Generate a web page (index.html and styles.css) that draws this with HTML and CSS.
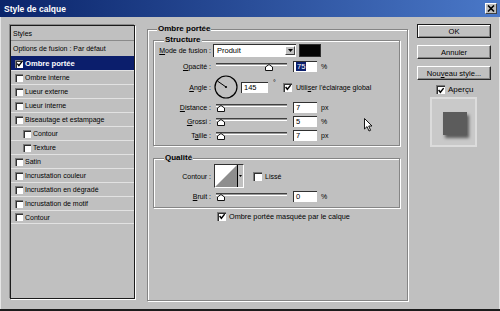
FILE: index.html
```html
<!DOCTYPE html>
<html lang="fr">
<head>
    <meta charset="UTF-8">
    <title>Style de calque</title>
    <link rel="stylesheet" href="styles.css">
</head>
<body>
    <div class="window">
        <div class="titlebar">
            <span class="title">Style de calque</span>
            <span class="close">
                <svg width="8" height="7" viewBox="0 0 8 7"><path d="M1 0.5 L7 6.5 M7 0.5 L1 6.5" stroke="#000" stroke-width="1.6"/></svg>
            </span>
        </div>

        <div class="content">
            <!-- Liste des styles -->
            <div class="styles">
                <div class="styles-head">Styles</div>
                <div class="style-item plain">Options de fusion : Par défaut</div>
                <div class="style-item active"><span class="cb small on"><svg width="8" height="8" viewBox="0 0 8 8"><path d="M1.5 3.5 L3.3 5.8 L6.8 1.2" stroke="#000" stroke-width="1.6" fill="none"/></svg></span>Ombre portée</div>
                <div class="style-item"><span class="cb small"></span>Ombre interne</div>
                <div class="style-item"><span class="cb small"></span>Lueur externe</div>
                <div class="style-item"><span class="cb small"></span>Lueur interne</div>
                <div class="style-item"><span class="cb small"></span>Biseautage et estampage</div>
                <div class="style-item sub"><span class="cb small"></span>Contour</div>
                <div class="style-item sub"><span class="cb small"></span>Texture</div>
                <div class="style-item"><span class="cb small"></span>Satin</div>
                <div class="style-item"><span class="cb small"></span>Incrustation couleur</div>
                <div class="style-item"><span class="cb small"></span>Incrustation en dégradé</div>
                <div class="style-item"><span class="cb small"></span>Incrustation de motif</div>
                <div class="style-item last"><span class="cb small"></span>Contour</div>
            </div>

            <!-- Réglages -->
            <div class="panel">
                <div class="legend">Ombre portée</div>

                <div class="group structure">
                    <div class="legend sub-legend">Structure</div>

                    <div class="row row-mode">
                        <span class="lbl"><u>M</u>ode de fusion :</span>
                        <div class="select">
                            <span>Produit</span>
                            <span class="drop"><svg width="5" height="3" viewBox="0 0 5 3"><path d="M0 0 H5 L2.5 3 Z" fill="#000"/></svg></span>
                        </div>
                        <span class="swatch"></span>
                    </div>

                    <div class="row row-slider gap2">
                        <span class="lbl"><u>O</u>pacité :</span>
                        <div class="slider"><span class="track"></span><svg class="thumb" style="left: 52px" width="8" height="7" viewBox="0 0 8 7"><path d="M0.5 6.5 V3 L4 0.5 L7.5 3 V6.5 Z" fill="#fff" stroke="#111" stroke-width="1"/></svg></div>
                        <span class="field"><span class="sel">75</span></span>
                        <span class="unit">%</span>
                    </div>

                    <div class="row row-angle gap2">
                        <span class="lbl"><u>A</u>ngle :</span>
                        <svg class="dial" width="24" height="24" viewBox="0 0 24 24">
                            <circle cx="12" cy="12" r="11" stroke="#000" stroke-width="1.2" fill="none"/>
                            <path d="M12 12 L3.8 6.3" stroke="#000" stroke-width="1"/>
                            <circle cx="12" cy="12" r="1.1" fill="#000"/>
                        </svg>
                        <span class="field field-wide">145</span>
                        <span class="deg">°</span>
                        <span class="cb on"><svg width="9" height="9" viewBox="0 0 9 9"><path d="M1.8 4 L3.8 6.5 L7.5 1.8" stroke="#000" stroke-width="1.6" fill="none"/></svg></span>
                        <span class="cb-text">Utili<u>s</u>er l'éclairage global</span>
                    </div>

                    <div class="row row-slider gap1">
                        <span class="lbl"><u>D</u>istance :</span>
                        <div class="slider"><span class="track"></span><svg class="thumb" style="left: 4px" width="8" height="7" viewBox="0 0 8 7"><path d="M0.5 6.5 V3 L4 0.5 L7.5 3 V6.5 Z" fill="#fff" stroke="#111" stroke-width="1"/></svg></div>
                        <span class="field">7</span>
                        <span class="unit">px</span>
                    </div>

                    <div class="row row-slider">
                        <span class="lbl"><u>G</u>rossi :</span>
                        <div class="slider"><span class="track"></span><svg class="thumb" style="left: 4px" width="8" height="7" viewBox="0 0 8 7"><path d="M0.5 6.5 V3 L4 0.5 L7.5 3 V6.5 Z" fill="#fff" stroke="#111" stroke-width="1"/></svg></div>
                        <span class="field">5</span>
                        <span class="unit">%</span>
                    </div>

                    <div class="row row-slider">
                        <span class="lbl">T<u>a</u>ille :</span>
                        <div class="slider"><span class="track"></span><svg class="thumb" style="left: 4px" width="8" height="7" viewBox="0 0 8 7"><path d="M0.5 6.5 V3 L4 0.5 L7.5 3 V6.5 Z" fill="#fff" stroke="#111" stroke-width="1"/></svg></div>
                        <span class="field">7</span>
                        <span class="unit">px</span>
                    </div>
                </div>

                <div class="group quality">
                    <div class="legend sub-legend">Qualité</div>

                    <div class="row row-contour">
                        <span class="lbl">Contour :</span>
                        <div class="contour">
                            <svg width="22" height="22" viewBox="0 0 22 22">
                                <rect width="22" height="22" fill="#fff"/>
                                <path d="M0 22 L22 0 V22 Z" fill="#8e8e8e"/>
                            </svg>
                            <span class="contour-drop"><svg width="3" height="2" viewBox="0 0 3 2"><path d="M0 0 H3 L1.5 2 Z" fill="#000"/></svg></span>
                        </div>
                        <span class="cb lisse"></span>
                        <span class="cb-text">Lissé</span>
                    </div>

                    <div class="row row-slider row-noise">
                        <span class="lbl"><u>B</u>ruit :</span>
                        <div class="slider"><span class="track"></span><svg class="thumb" style="left: 4px" width="8" height="7" viewBox="0 0 8 7"><path d="M0.5 6.5 V3 L4 0.5 L7.5 3 V6.5 Z" fill="#fff" stroke="#111" stroke-width="1"/></svg></div>
                        <span class="field">0</span>
                        <span class="unit">%</span>
                    </div>
                </div>

                <div class="row row-knockout">
                    <span class="cb on"><svg width="9" height="9" viewBox="0 0 9 9"><path d="M1.8 4 L3.8 6.5 L7.5 1.8" stroke="#000" stroke-width="1.6" fill="none"/></svg></span>
                    <span class="cb-text">Ombre portée masquée par le calque</span>
                </div>

                <svg class="cursor" width="9" height="14" viewBox="0 0 9 14">
                    <path d="M0.5 0.5 V11 L3 8.6 L5 13 L6.6 12.3 L4.7 8 H8 Z" fill="#fff" stroke="#000" stroke-width="0.9"/>
                </svg>
            </div>

            <!-- Boutons -->
            <div class="actions">
                <button class="btn btn-default">OK</button>
                <button class="btn">Annuler</button>
                <button class="btn">Nou<u>v</u>eau style...</button>
                <div class="preview-toggle">
                    <span class="cb on"><svg width="9" height="9" viewBox="0 0 9 9"><path d="M1.8 4 L3.8 6.5 L7.5 1.8" stroke="#000" stroke-width="1.6" fill="none"/></svg></span>
                    <span class="cb-text big">Aper<u>ç</u>u</span>
                </div>
                <div class="preview">
                    <span class="preview-square"></span>
                </div>
            </div>
        </div>
    </div>
</body>
</html>
```

FILE: styles.css
```css
* {
    box-sizing: border-box;
}

body {
    margin: 0;
    background-color: #c0c0c0;
    font-family: "Liberation Sans", Arial, sans-serif;
    font-size: 7px;
    color: #000;
}

u {
    text-decoration-thickness: 1px;
    text-underline-offset: 1px;
}

.window {
    width: 500px;
    height: 311px;
    background-color: #c0c0c0;
    border-bottom: 2px solid #1c1c1c;
    overflow: hidden;
}

.titlebar {
    height: 17px;
    display: flex;
    align-items: center;
    justify-content: space-between;
    padding: 0 3px 0 4px;
    background: linear-gradient(to right, #0a246a, #4a78c8);
    color: #fff;
    font-weight: bold;
    font-size: 8.5px;
}

.close {
    width: 12px;
    height: 11px;
    display: flex;
    align-items: center;
    justify-content: center;
    background-color: #c0c0c0;
    border: 1px solid;
    border-color: #fff #404040 #404040 #fff;
}

.content {
    display: flex;
    align-items: flex-start;
    height: 292px;
    padding: 8px 0 0 10px;
    box-shadow: inset 1px 0 #e6e6e6, inset -1px 0 #e6e6e6;
}

/* Liste des styles */
.styles {
    width: 125px;
    height: 274px;
    border: 1px solid #1c1c1c;
    box-shadow: 1px 1px 0 #fff, -1px -1px 0 #8a8a8a;
    flex-shrink: 0;
}

.styles-head {
    height: 15px;
    display: flex;
    align-items: center;
    padding-left: 2px;
    border-bottom: 1px solid #8a8a8a;
}

.style-item {
    height: 14px;
    display: flex;
    align-items: center;
    gap: 2px;
    padding-left: 4px;
    border-top: 1px solid #e2e2e2;
    white-space: nowrap;
}

.style-item.plain {
    height: 15px;
    padding-left: 2px;
    border-top: none;
}

.style-item.sub {
    padding-left: 12px;
}

.style-item.last {
    border-bottom: 1px solid #e2e2e2;
}

.style-item.active {
    background-color: #0b1e6c;
    color: #fff;
    font-weight: bold;
    font-size: 7.6px;
    border-top-color: #0b1e6c;
}

/* Cases à cocher */
.cb {
    width: 9px;
    height: 9px;
    display: inline-flex;
    align-items: center;
    justify-content: center;
    background-color: #fff;
    border-top: 1px solid #7a7a7a;
    border-left: 1px solid #7a7a7a;
    box-shadow: inset 1px 1px 0 #303030;
    flex-shrink: 0;
}

.cb.small {
    width: 8px;
    height: 8px;
}

.cb-text {
    margin-left: 4px;
    white-space: nowrap;
}

.cb-text.big {
    font-size: 8px;
    margin-left: 3px;
}

/* Panneau principal */
.panel {
    position: relative;
    width: 261px;
    height: 272px;
    margin: 4px 0 0 12px;
    border: 1px solid #858585;
    box-shadow: 1px 1px 0 #fff, inset 1px 1px 0 #fff;
    flex-shrink: 0;
}

.legend {
    display: table;
    margin: -6px 0 0 9px;
    padding: 0 1px;
    line-height: 10px;
    background-color: #c0c0c0;
    font-weight: bold;
    font-size: 8px;
}

.sub-legend {
    margin: -6px 0 -2px 10px;
}

.group {
    margin: 0 7px 0 5px;
    border: 1px solid #858585;
    box-shadow: 1px 1px 0 #fff, inset 1px 1px 0 #fff;
}

.structure {
    margin-top: 6px;
    height: 106px;
}

.quality {
    margin-top: 12px;
    height: 50px;
}

.row {
    display: flex;
    align-items: center;
    white-space: nowrap;
}

.gap1 {
    margin-top: 1px;
}

.gap2 {
    margin-top: 2px;
}

.lbl {
    width: 57px;
    text-align: right;
    flex-shrink: 0;
}

.row-mode {
    height: 14px;
}

.select {
    width: 83px;
    height: 13px;
    margin-left: 2px;
    display: flex;
    align-items: center;
    justify-content: space-between;
    padding: 0 1px 0 3px;
    background-color: #fff;
    border-top: 1px solid #303030;
    border-left: 1px solid #303030;
    font-size: 7.5px;
}

.drop {
    width: 10px;
    height: 9px;
    display: flex;
    align-items: center;
    justify-content: center;
    background-color: #c0c0c0;
    border: 1px solid;
    border-color: #fff #404040 #404040 #fff;
}

.swatch {
    width: 22px;
    height: 13px;
    margin-left: 3px;
    background-color: #050505;
    border: 1px solid #303030;
}

.row-slider {
    height: 14px;
}

.slider {
    position: relative;
    width: 77px;
    height: 14px;
    margin-left: 2px;
}

.track {
    display: block;
    margin: 4px 3px 0;
    height: 3px;
    background-color: #9a9a9a;
    border-top: 1px solid #404040;
    border-bottom: 1px solid #fff;
}

.thumb {
    position: absolute;
    top: 5px;
}

.field {
    width: 24px;
    height: 11px;
    margin-left: 3px;
    padding-left: 2px;
    display: flex;
    align-items: center;
    background-color: #fff;
    border-top: 1px solid #303030;
    border-left: 1px solid #303030;
    font-size: 7.5px;
}

.field-wide {
    width: 27px;
}

.sel {
    background-color: #0b1e6c;
    color: #fff;
    padding: 0 1px;
    line-height: 9px;
}

.unit {
    margin-left: 4px;
}

.row-angle {
    height: 24px;
}

.dial {
    margin-left: 3px;
    flex-shrink: 0;
}

.row-angle .field {
    margin-left: 3px;
}

.deg {
    width: 15px;
    padding-left: 5px;
    align-self: flex-start;
    margin-top: 4px;
}

.row-contour {
    height: 24px;
    margin-top: 3px;
}

.contour {
    width: 30px;
    height: 24px;
    margin-left: 3px;
    display: flex;
    border-top: 1px solid #303030;
    border-left: 1px solid #303030;
    border-right: 1px solid #fff;
    border-bottom: 1px solid #fff;
}

.contour svg {
    display: block;
}

.contour-drop {
    flex: 1;
    display: flex;
    align-items: center;
    justify-content: center;
    background-color: #c0c0c0;
    border-left: 1px solid #000;
}

.cb.lisse {
    margin-left: 9px;
}

.row-contour .cb-text {
    margin-left: 3px;
}

.row-noise {
    height: 12px;
    margin-top: 2px;
}

.row-noise .slider {
    height: 12px;
}

.row-noise .track {
    margin-top: 3px;
}

.row-noise .thumb {
    top: 4px;
}

.row-knockout {
    height: 10px;
    margin: 3px 0 0 69px;
}

.row-knockout .cb-text {
    margin-left: 3px;
    font-size: 7.3px;
}

.cursor {
    position: absolute;
    left: 216px;
    top: 88px;
}

/* Boutons */
.actions {
    width: 74px;
    margin: -1px 0 0 9px;
    display: flex;
    flex-direction: column;
    flex-shrink: 0;
}

.btn {
    height: 14px;
    margin-bottom: 7px;
    padding: 0;
    background-color: #c0c0c0;
    border: 1px solid;
    border-color: #fff #2a2a2a #2a2a2a #fff;
    box-shadow: inset -1px -1px 0 #858585;
    font-family: inherit;
    font-size: 7.6px;
    color: #000;
}

.btn-default {
    border-color: #1a1a1a;
    box-shadow: inset 1px 1px 0 #fff, inset -1px -1px 0 #858585;
}

.preview-toggle {
    display: flex;
    align-items: center;
    height: 9px;
    margin: -2px 0 0 19px;
}

.preview {
    width: 47px;
    height: 50px;
    margin: 3px 0 0 13px;
    display: flex;
    align-items: center;
    justify-content: center;
    background-color: #c9c9c9;
    border: 2px solid #dcdcdc;
}

.preview-square {
    width: 24px;
    height: 23px;
    margin: 2px 0 0 2px;
    background-color: #5c5c5c;
    box-shadow: 2px 3px 3px rgba(0, 0, 0, 0.55);
}
```
